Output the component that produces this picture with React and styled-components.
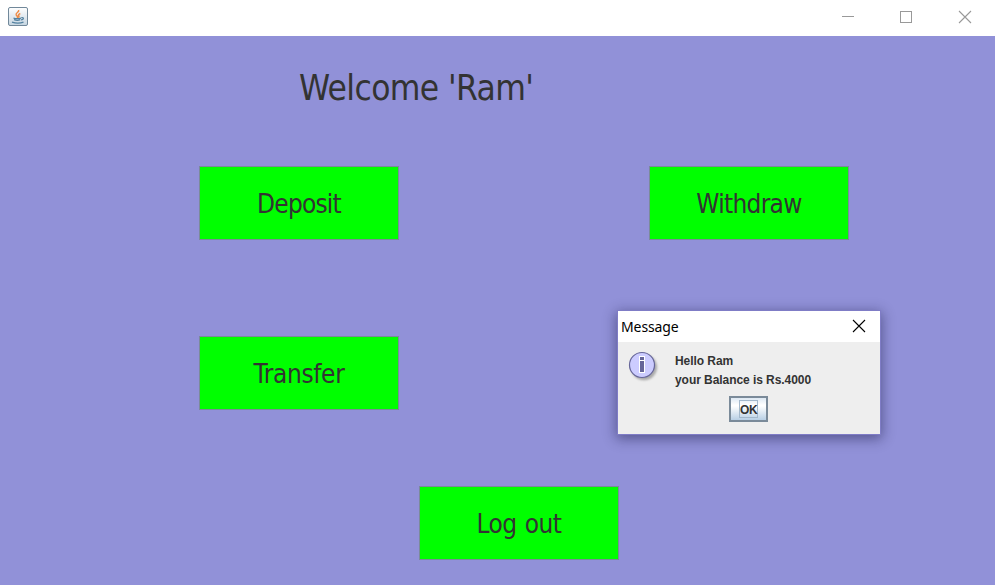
import React from "react";
import styled, { createGlobalStyle } from "styled-components";

const GlobalStyle = createGlobalStyle`
  * { box-sizing: border-box; }
  body { margin: 0; overflow: hidden; }
`;

const Frame = styled.div`
  position: relative;
  width: 995px;
  height: 585px;
  display: flex;
  flex-direction: column;
  background: #9191d8;
  font-family: "Noto Sans", sans-serif;
  color: #333333;
`;

const TitleBar = styled.header`
  flex: 0 0 36px;
  display: flex;
  justify-content: space-between;
  padding: 6px 23px 0 7px;
  background: #ffffff;
`;

const WindowControls = styled.div`
  display: flex;
  gap: 45px;
  padding-top: 4px;
`;

const Content = styled.main`
  flex: 1;
  padding-left: 199px;
`;

const Heading = styled.h1`
  margin: 0;
  height: 130px;
  padding: 28px 0 0 100px;
  font-family: "DejaVu Sans Condensed", "DejaVu Sans", sans-serif;
  font-stretch: condensed;
  font-size: 35px;
  font-weight: 400;
  line-height: 48px;
  letter-spacing: -0.6px;
  white-space: nowrap;
`;

const ActionRow = styled.div`
  display: flex;
  gap: 250px;
  height: 74px;
  margin-bottom: ${(p) => p.$after || 0}px;
  padding-left: ${(p) => p.$indent || 0}px;
`;

const ActionButton = styled.button`
  width: 200px;
  height: 74px;
  padding: 1px 0 0;
  border: 1px solid #7a8a99;
  border-radius: 0;
  background: #00ff00;
  color: #333333;
  font: 400 26px/36px "DejaVu Sans Condensed", "DejaVu Sans", sans-serif;
  font-stretch: condensed;
  letter-spacing: ${(p) => p.$tracking}px;
  word-spacing: 1.5px;
  white-space: nowrap;
`;

const Dialog = styled.section`
  position: absolute;
  left: 617px;
  top: 310px;
  width: 264px;
  height: 125px;
  display: flex;
  flex-direction: column;
  border: 1px solid #7f7cc6;
  background: #eeeeee;
  box-shadow: 0 3px 12px 1px rgba(20, 20, 60, 0.46);
`;

const DialogTitle = styled.div`
  flex: 0 0 31px;
  display: flex;
  justify-content: space-between;
  padding: 0 14px 0 3px;
  background: #ffffff;
  color: #000000;
  font-size: 14px;
  line-height: 31px;
  letter-spacing: -0.1px;
`;

const CloseIcon = styled.svg`
  margin-top: 8px;
`;

const MessageRow = styled.div`
  display: flex;
  gap: 15px;
  height: 54px;
  padding: 9px 0 0 10px;
`;

const MessageText = styled.div`
  padding-top: 1px;
  font: 700 12px/19px "Liberation Sans", sans-serif;
  letter-spacing: -0.06px;
  white-space: nowrap;
`;

const OkButton = styled.button`
  align-self: flex-start;
  margin-left: 111px;
  width: 39px;
  height: 26px;
  display: flex;
  align-items: center;
  justify-content: center;
  padding: 0;
  border: 2px solid #7a8a99;
  background: linear-gradient(#dde8f3 0%, #ffffff 32%, #ffffff 36%, #b8cfe5 100%);
  color: #333333;
`;

const FocusRing = styled.span`
  width: 19px;
  height: 18px;
  border: 1px solid #a3b8cc;
  font: 700 12px/18px "Liberation Sans", sans-serif;
  letter-spacing: -0.4px;
`;

function JavaIcon() {
  return (
    <svg width="22" height="22" viewBox="0 0 22 22">
      <defs>
        <linearGradient id="tile" x1="0" y1="0" x2="0" y2="1">
          <stop offset="0" stopColor="#ffffff" />
          <stop offset="1" stopColor="#c5d5e1" />
        </linearGradient>
      </defs>
      <rect x="1.5" y="1.5" width="19" height="18" rx="1.5" fill="url(#tile)" stroke="#71889a" />
      <path d="M11.6 4 C12.6 6.2 8.2 6.8 9.2 8.8 C10 10.2 11 10.4 10.4 12 M13.3 7.5 C10.8 8.6 11.4 9.3 12 10.2 L11.5 11.8" fill="none" stroke="#ef8a43" strokeWidth="1.5" />
      <path d="M6.5 12.1 Q10 13.3 14 12.1 M7 13.7 Q10.5 14.9 13.3 13.7 M14.3 11.7 C17.3 11 17 13.7 14 13.9 M5 16.2 Q11 18.2 16.5 16.2" fill="none" stroke="#5482a1" strokeWidth="1.3" />
    </svg>
  );
}

function InfoIcon() {
  return (
    <svg width="32" height="32" viewBox="0 0 32 32">
      <defs>
        <filter id="soft" x="-30%" y="-30%" width="160%" height="160%">
          <feGaussianBlur stdDeviation="1.3" />
        </filter>
      </defs>
      <circle cx="16" cy="16.2" r="13" fill="#999999" opacity="0.8" filter="url(#soft)" />
      <circle cx="14" cy="14" r="12.5" fill="#ccccff" stroke="#666699" strokeWidth="1.2" />
      <path d="M11 5h6v17h-6z" fill="#ffffff" />
      <path d="M12 6h4v3h-4zM12 10h4v11h-4z" fill="#666699" />
    </svg>
  );
}

export default function App() {
  return (
    <Frame>
      <GlobalStyle />
      <TitleBar>
        <JavaIcon />
        <WindowControls>
          <svg width="14" height="14" viewBox="0 0 14 14" shapeRendering="crispEdges">
            <path d="M2 6.5h12" stroke="#999999" />
          </svg>
          <svg width="14" height="14" viewBox="0 0 14 14" shapeRendering="crispEdges">
            <rect x="1.5" y="1.5" width="11" height="11" fill="none" stroke="#999999" />
          </svg>
          <svg width="14" height="14" viewBox="0 0 14 14">
            <path d="M1 1L13 13M13 1L1 13" stroke="#999999" strokeWidth="1.1" />
          </svg>
        </WindowControls>
      </TitleBar>
      <Content>
        <Heading>Welcome 'Ram'</Heading>
        <ActionRow $after={96}>
          <ActionButton $tracking={-0.8}>Deposit</ActionButton>
          <ActionButton $tracking={-0.7}>Withdraw</ActionButton>
        </ActionRow>
        <ActionRow $after={76}>
          <ActionButton $tracking={-0.35}>Transfer</ActionButton>
        </ActionRow>
        <ActionRow $indent={220}>
          <ActionButton $tracking={-0.6}>Log out</ActionButton>
        </ActionRow>
      </Content>
      <Dialog>
        <DialogTitle>
          Message
          <CloseIcon width="14" height="14" viewBox="0 0 14 14">
            <path d="M1 1L13 13M13 1L1 13" stroke="#000000" strokeWidth="1.1" />
          </CloseIcon>
        </DialogTitle>
        <MessageRow>
          <InfoIcon />
          <MessageText>
            <div>Hello Ram</div>
            <div>your Balance is Rs.4000</div>
          </MessageText>
        </MessageRow>
        <OkButton>
          <FocusRing>OK</FocusRing>
        </OkButton>
      </Dialog>
    </Frame>
  );
}
